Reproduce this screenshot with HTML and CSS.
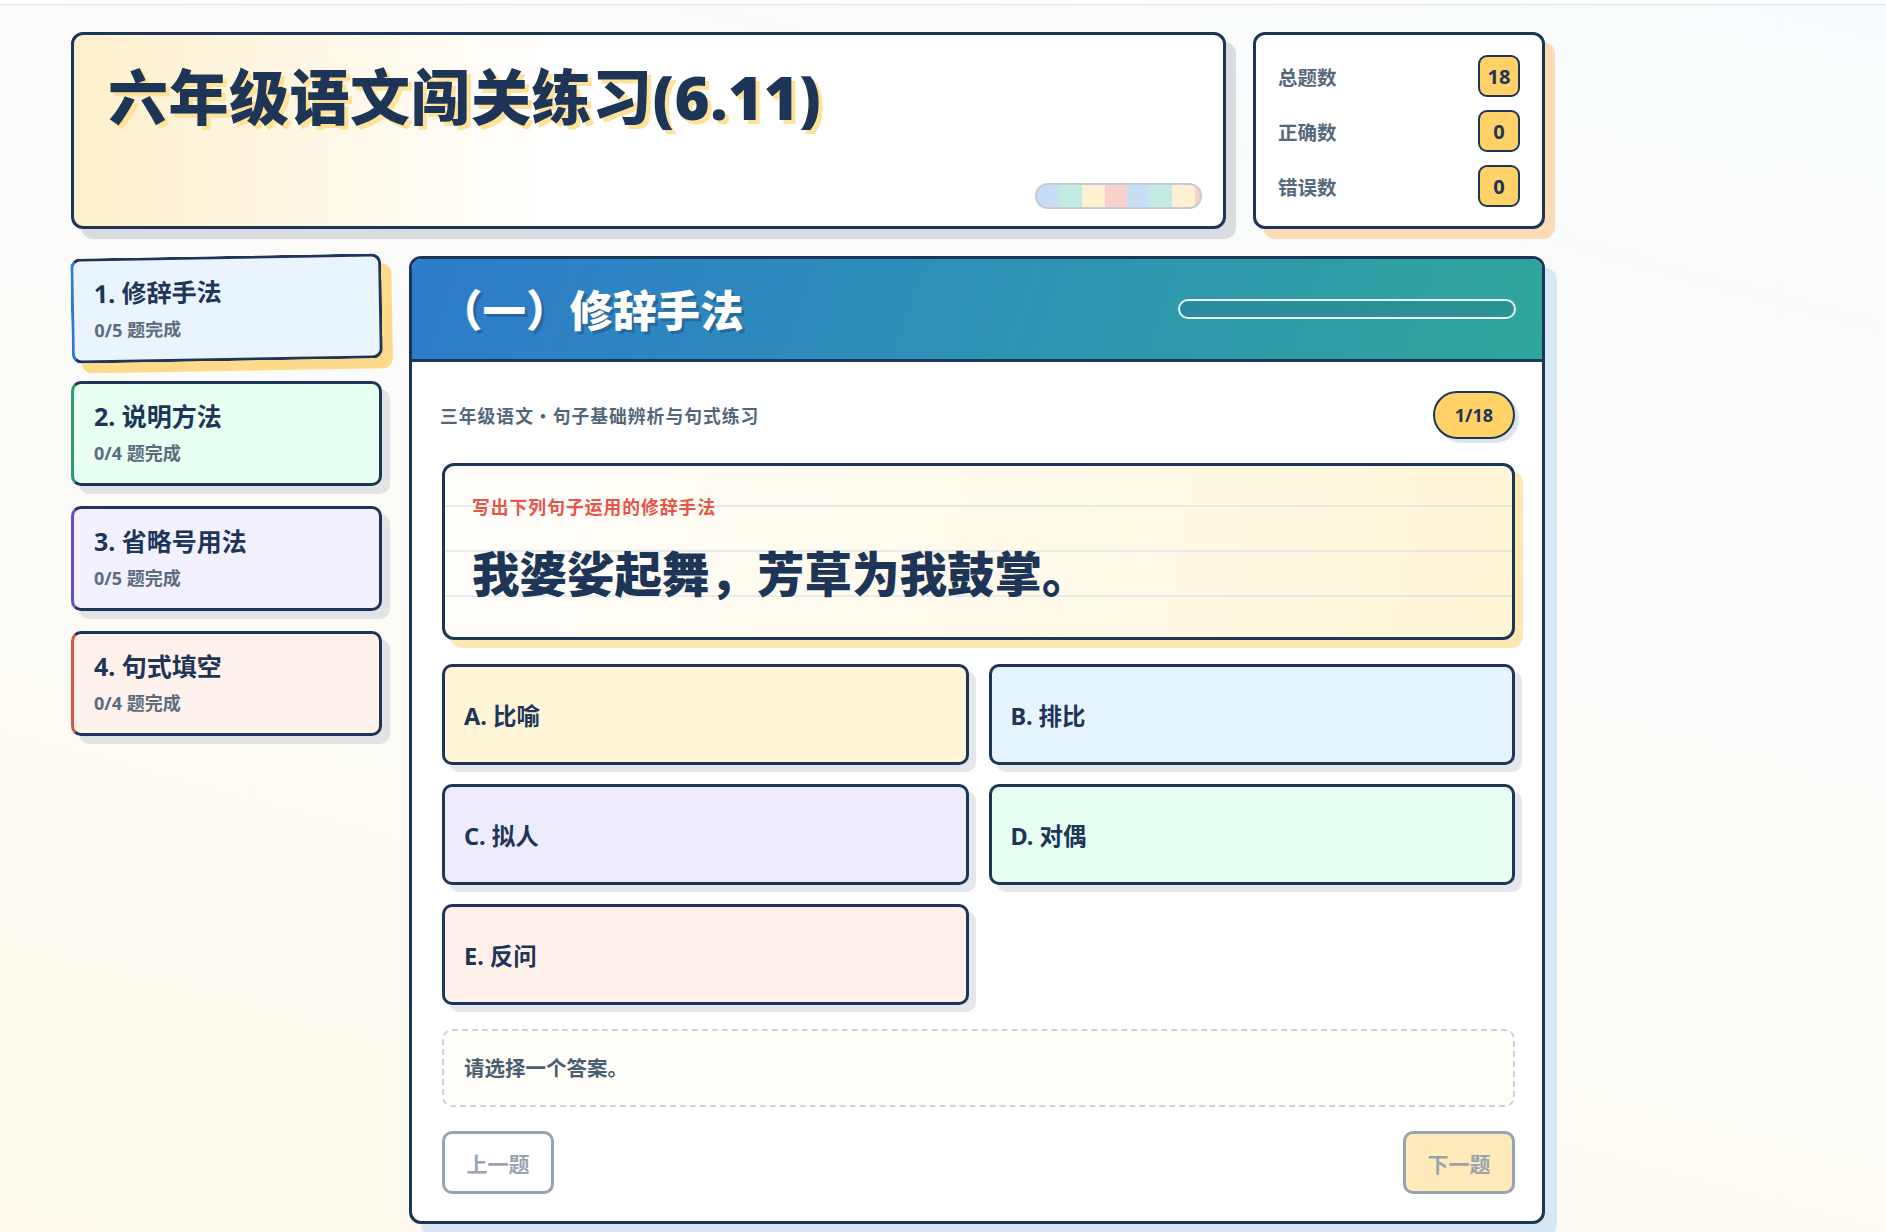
FILE: index.html
```html
<!DOCTYPE html>
<html lang="zh-CN">
<head>
    <meta charset="UTF-8">
    <meta name="viewport" content="width=device-width, initial-scale=1.0">
    <title>六年级语文闯关练习(6.11)</title>
    <link rel="stylesheet" href="styles.css">
</head>
<body>

<div class="top-rule"></div>

<div class="app">
    <!-- tiêu đề -->
    <header class="hero">
        <h1>六年级语文闯关练习(6.11)</h1>
        <div class="stripe-pill"></div>
    </header>

    <!-- thống kê -->
    <aside class="stats">
        <div class="stat-row">
            <span class="stat-label">总题数</span>
            <span class="stat-value" id="total">18</span>
        </div>
        <div class="stat-row">
            <span class="stat-label">正确数</span>
            <span class="stat-value" id="correct">0</span>
        </div>
        <div class="stat-row">
            <span class="stat-label">错误数</span>
            <span class="stat-value" id="wrong">0</span>
        </div>
    </aside>

    <!-- danh sách phần -->
    <nav class="sections">
        <div class="section-card blue active">
            <div class="section-name">1. 修辞手法</div>
            <div class="section-done">0/5 题完成</div>
        </div>
        <div class="section-card green">
            <div class="section-name">2. 说明方法</div>
            <div class="section-done">0/4 题完成</div>
        </div>
        <div class="section-card purple">
            <div class="section-name">3. 省略号用法</div>
            <div class="section-done">0/5 题完成</div>
        </div>
        <div class="section-card red">
            <div class="section-name">4. 句式填空</div>
            <div class="section-done">0/4 题完成</div>
        </div>
    </nav>

    <!-- khung câu hỏi -->
    <main class="quiz">
        <div class="quiz-head">
            <h2>（一）修辞手法</h2>
            <div class="quiz-progress"><div class="quiz-progress-fill" style="width: 0%"></div></div>
        </div>

        <div class="quiz-body">
            <div class="meta-row">
                <span class="meta-text">三年级语文・句子基础辨析与句式练习</span>
                <span class="counter">1/18</span>
            </div>

            <div class="question">
                <div class="question-tip">写出下列句子运用的修辞手法</div>
                <div class="question-text">我婆娑起舞，芳草为我鼓掌。</div>
            </div>

            <div class="options">
                <button class="option opt-a">A. 比喻</button>
                <button class="option opt-b">B. 排比</button>
                <button class="option opt-c">C. 拟人</button>
                <button class="option opt-d">D. 对偶</button>
                <button class="option opt-e">E. 反问</button>
            </div>

            <div class="feedback" id="feedback">请选择一个答案。</div>

            <div class="nav-row">
                <button class="nav-btn" disabled>上一题</button>
                <button class="nav-btn next" disabled>下一题</button>
            </div>
        </div>
    </main>
</div>

<script>
    var options = document.querySelectorAll(".option");
    options.forEach(function(btn) {
        btn.addEventListener("click", function() {
            options.forEach(function(b) { b.classList.remove("picked"); });
            btn.classList.add("picked");
            document.getElementById("feedback").innerText = "已选择：" + btn.innerText;
        });
    });
</script>

</body>
</html>
```

FILE: styles.css
```css
/* trang */
body {
    margin: 0;
    min-height: 1232px;
    font-family: "Noto Sans", "Noto Sans CJK SC", sans-serif;
    color: #1d3557;
    background: linear-gradient(195deg, #f8fbfd 0%, #fbfbf8 50%, #fef9ec 100%);
}
.top-rule {
    height: 4px;
    border-bottom: 1px solid #e3e5e8;
    background-color: #ffffff;
}
.app {
    width: 1474px;
    margin: 27px 0 0 71px;
    display: grid;
    grid-template-columns: 311px 1fr 292px;
    grid-template-rows: 197px auto;
    gap: 27px;
}

/* tiêu đề */
.hero {
    grid-column: 1 / 3;
    display: flex;
    flex-direction: column;
    padding: 26px 21px 17px 34px;
    background: linear-gradient(90deg, #fff0cc 0%, #fff8e8 22%, #ffffff 42%);
    border: 3px solid #1d3557;
    border-radius: 12px;
    box-shadow: 10px 10px 0 #d9dde2;
}
.hero h1 {
    margin: 0;
    font-size: 60px;
    line-height: 1.2;
    font-weight: 900;
    letter-spacing: 0.5px;
    text-shadow: 4px 4px 0 #ffe29a;
}
.stripe-pill {
    margin-top: auto;
    align-self: flex-end;
    width: 163px;
    height: 22px;
    border: 2px solid #c3cad2;
    border-radius: 14px;
    background: repeating-linear-gradient(90deg, #c6ddf5 0 22px, #c2eae3 22px 45px, #fff0d0 45px 68px, #f9d0cd 68px 90px);
}

/* thống kê */
.stats {
    display: flex;
    flex-direction: column;
    gap: 13px;
    padding: 20px 22px;
    background-color: #ffffff;
    border: 3px solid #1d3557;
    border-radius: 12px;
    box-shadow: 10px 10px 0 #fddbb6;
}
.stat-row {
    display: flex;
    align-items: center;
    justify-content: space-between;
    height: 42px;
}
.stat-label {
    font-size: 19.5px;
    font-weight: 700;
    color: #56697c;
}
.stat-value {
    width: 38px;
    height: 38px;
    display: flex;
    align-items: center;
    justify-content: center;
    font-size: 20px;
    font-weight: 700;
    background-color: #ffd166;
    border: 2px solid #1d3557;
    border-radius: 9px;
}

/* danh sách phần */
.sections {
    display: flex;
    flex-direction: column;
    gap: 20px;
}
.section-card {
    height: 99px;
    padding: 0 20px;
    border: 3px solid #1d3557;
    border-radius: 10px;
    box-shadow: 8px 8px 0 #e1e3e4;
}
.section-card.blue { background-color: #eaf4ff; border-left-color: #2b7bcf; }
.section-card.green { background-color: #e8fff4; border-left-color: #2e9b6d; }
.section-card.purple { background-color: #f3f0ff; border-left-color: #6a4cc6; }
.section-card.red { background-color: #fff1ec; border-left-color: #d9534f; }
.section-card.active {
    transform: rotate(-1deg);
    box-shadow: 10px 10px 0 #ffda8a;
}
.section-name {
    margin-top: 16px;
    font-size: 25px;
    line-height: 32px;
    font-weight: 700;
}
.section-done {
    margin-top: 10px;
    font-size: 18px;
    line-height: 22px;
    font-weight: 700;
    color: #5a6c7e;
}

/* khung câu hỏi */
.quiz {
    grid-column: 2 / 4;
    background-color: #ffffff;
    border: 3px solid #1d3557;
    border-radius: 12px;
    box-shadow: 12px 12px 0 #d6e8f4;
    overflow: hidden;
}
.quiz-head {
    height: 100px;
    display: flex;
    align-items: center;
    justify-content: space-between;
    padding: 0 26px 0 27px;
    background: linear-gradient(110deg, #2d7bca 0%, #2e91b6 50%, #2fa69b 100%);
    border-bottom: 3px solid #1d3557;
}
.quiz-head h2 {
    margin: 0;
    font-family: "Noto Sans CJK SC", sans-serif;
    font-size: 43.5px;
    line-height: 1.2;
    font-weight: 900;
    color: #ffffff;
    text-shadow: 3px 3px 0 rgba(29, 53, 87, 0.35);
}
.quiz-progress {
    width: 334px;
    height: 16px;
    border: 2px solid #e9f2f3;
    border-radius: 12px;
    background-color: rgba(29, 53, 87, 0.15);
    overflow: hidden;
}
.quiz-progress-fill {
    height: 100%;
    background-color: #ffd166;
}
.quiz-body {
    display: flex;
    flex-direction: column;
    gap: 24px;
    padding: 29px 27px 27px 30px;
}
.meta-row {
    display: flex;
    align-items: center;
    justify-content: space-between;
    margin-left: -2px;
}
.meta-text {
    font-size: 17.8px;
    letter-spacing: 1px;
    font-weight: 700;
    color: #53677b;
}
.counter {
    width: 78px;
    height: 44px;
    display: flex;
    align-items: center;
    justify-content: center;
    font-size: 18px;
    font-weight: 700;
    background-color: #ffd166;
    border: 2px solid #1d3557;
    border-radius: 24px;
    box-shadow: 4px 4px 0 #dfe3e8;
}

/* câu hỏi */
.question {
    padding: 28px 30px 33px 27px;
    border: 3px solid #1d3557;
    border-radius: 12px;
    box-shadow: 8px 8px 0 #ffe9b3;
    background:
        repeating-linear-gradient(180deg, transparent 0 39px, rgba(195, 218, 230, 0.45) 39px 41px, transparent 41px 45px),
        linear-gradient(100deg, #fffefb 0%, #fffaea 55%, #fff5d6 100%);
}
.question-tip {
    font-size: 17.8px;
    line-height: 26px;
    letter-spacing: 1px;
    font-weight: 700;
    color: #e8544a;
}
.question-text {
    margin-top: 24px;
    font-size: 47.5px;
    line-height: 60px;
    font-weight: 900;
}

/* đáp án */
.options {
    display: grid;
    grid-template-columns: 1fr 1fr;
    column-gap: 20px;
    row-gap: 19px;
}
.option {
    height: 101px;
    padding: 0 19px;
    text-align: left;
    font-family: inherit;
    font-size: 23.5px;
    font-weight: 700;
    color: #1d3557;
    border: 3px solid #1d3557;
    border-radius: 10px;
    box-shadow: 7px 7px 0 #e4e8ec;
    cursor: pointer;
}
.opt-a { background-color: #fff6d8; }
.opt-b { background-color: #e6f4ff; }
.opt-c { background-color: #efebff; }
.opt-d { background-color: #e6fff2; }
.opt-e { background-color: #fff0ec; }
.option.picked { box-shadow: 7px 7px 0 #ffd166; }

/* phản hồi */
.feedback {
    padding: 24px 20px;
    font-size: 20.5px;
    line-height: 26px;
    font-weight: 700;
    color: #4a5e72;
    background-color: #fffdf7;
    border: 2px dashed #cfd2d5;
    border-radius: 10px;
}

/* nút chuyển câu */
.nav-row {
    display: flex;
    justify-content: space-between;
}
.nav-btn {
    width: 112px;
    height: 63px;
    padding: 0;
    font-family: inherit;
    font-size: 21px;
    font-weight: 700;
    color: #1d3557;
    background-color: #ffffff;
    border: 3px solid #1d3557;
    border-radius: 10px;
    cursor: pointer;
}
.nav-btn.next {
    background-color: #ffd166;
}
.nav-btn:disabled {
    opacity: 0.45;
    cursor: default;
}
```
